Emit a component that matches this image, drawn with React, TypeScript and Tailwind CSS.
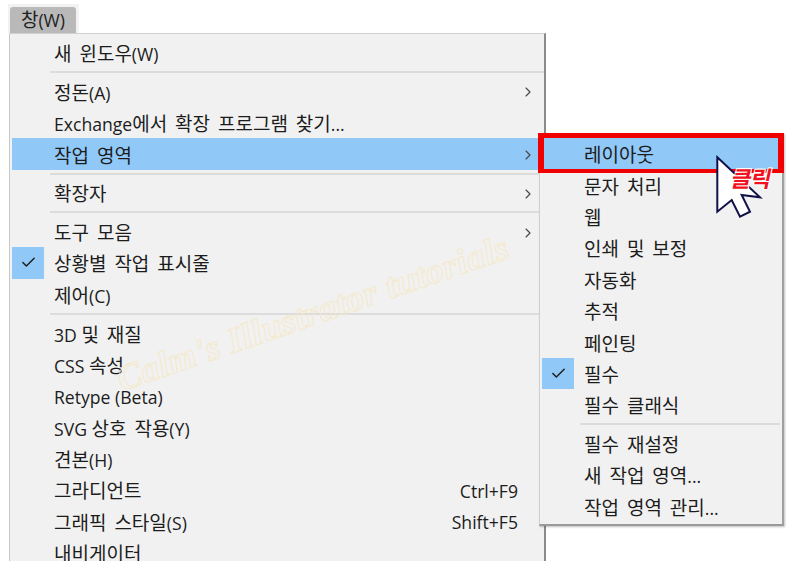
import React from "react";
import { Check, ChevronRight } from "lucide-react";

// ─── Menu data ─────────────────────────────────────────────────────────────────

type Item = { label?: string; sep?: boolean; arrow?: boolean; checked?: boolean; hot?: boolean; key?: string };

const mainItems: Item[] = [
  { label: "새 윈도우(W)" },
  { sep: true },
  { label: "정돈(A)", arrow: true },
  { label: "Exchange에서 확장 프로그램 찾기..." },
  { label: "작업 영역", arrow: true, hot: true },
  { sep: true },
  { label: "확장자", arrow: true },
  { sep: true },
  { label: "도구 모음", arrow: true },
  { label: "상황별 작업 표시줄", checked: true },
  { label: "제어(C)" },
  { sep: true },
  { label: "3D 및 재질" },
  { label: "CSS 속성" },
  { label: "Retype (Beta)" },
  { label: "SVG 상호 작용(Y)" },
  { label: "견본(H)" },
  { label: "그라디언트", key: "Ctrl+F9" },
  { label: "그래픽 스타일(S)", key: "Shift+F5" },
  { label: "내비게이터" },
];

const subItems: Item[] = [
  { label: "레이아웃", hot: true },
  { label: "문자 처리" },
  { label: "웹" },
  { label: "인쇄 및 보정" },
  { label: "자동화" },
  { label: "추적" },
  { label: "페인팅" },
  { label: "필수", checked: true },
  { label: "필수 클래식" },
  { sep: true },
  { label: "필수 재설정" },
  { label: "새 작업 영역..." },
  { label: "작업 영역 관리..." },
];

// Hangul runs are set larger than latin ones, the reference font has wider Hangul
const Label: React.FC<{ text: string }> = ({ text }) => (
  <span className="whitespace-nowrap text-[17.6px] leading-none">
    {text.split(/([가-힣]+(?: [가-힣]+)*)/).map((run, i) =>
      /[가-힣]/.test(run) ? (
        <span key={i} className="text-[19px] [word-spacing:3px]">
          {run}
        </span>
      ) : (
        <span key={i}>{run}</span>
      )
    )}
  </span>
);

const MenuRow: React.FC<{ item: Item; sepClass: string }> = ({ item, sepClass }) => {
  if (item.sep) {
    return (
      <div className={`flex h-[7.3px] items-center ${sepClass}`}>
        <div className="h-[2px] w-full bg-[#dcdcdc]" />
      </div>
    );
  }
  return (
    <div className={`flex h-[31.4px] items-center text-[#1c1c1c] ${item.hot ? "bg-[#90c8f8]" : ""}`}>
      <div className="flex h-full w-[32px] shrink-0 items-center justify-center">
        {item.checked && (
          <div className="flex h-full w-full items-center justify-center bg-[#90c8f8]">
            <Check className="h-[17px] w-[17px] text-[#222222]" strokeWidth={2.2} />
          </div>
        )}
      </div>
      <span className="ml-[10px] mt-[4px] flex">
        <Label text={item.label ?? ""} />
      </span>
      {item.key && <span className="ml-auto mr-[26px] mt-[2px] whitespace-nowrap text-[17.6px]">{item.key}</span>}
      {item.arrow && <ChevronRight className="ml-auto mr-[8px] mt-[2px] h-[16px] w-[16px] text-[#444444]" strokeWidth={1.6} />}
    </div>
  );
};

export default function App() {
  return (
    <div className="relative h-[577px] w-[800px] overflow-hidden bg-white font-['Open_Sans','Noto_Sans_CJK_KR',sans-serif]">
      {/* menu bar */}
      <div className="ml-[8px] mt-[4px] flex h-[29px] w-[71px] items-end justify-start bg-[#f2f2f2] pl-[2px]">
        <div className="flex h-[26px] w-[66px] items-center justify-center rounded-t-[3px] bg-[#b9b9b9] text-[#222222]">
          <Label text="창(W)" />
        </div>
      </div>

      {/* main menu, cut off by the picture edge */}
      <div className="ml-[9px] h-[528px] w-[537px] overflow-hidden border-r-2 border-l border-t border-r-[#8a8a8a] border-l-[#c8c8c8] border-t-[#d0d0d0] bg-[#f1f1f1] pl-[2px] pt-[3px]">
        {mainItems.map((item, i) => (
          <MenuRow key={i} item={item} sepClass="ml-[38px]" />
        ))}
      </div>

      {/* submenu */}
      <div className="absolute left-[539px] top-[133px] h-[393px] w-[245px] border-r-2 border-b-2 border-l border-r-[#a0a0a0] border-b-[#9a9a9a] border-l-[#d0d0d0] bg-[#f1f1f1] pl-[2px] pt-[5px] shadow-[1px_1px_2px_rgba(0,0,0,0.25)]">
        {subItems.map((item, i) => (
          <MenuRow key={i} item={item} sepClass="ml-[38px] mr-[2px]" />
        ))}
      </div>

      {/* red highlight around the first submenu row */}
      <div className="absolute left-[538px] top-[133px] h-[40px] w-[246px] border-x-[6px] border-t-[5px] border-b-[4px] border-[#f00000]" />

      {/* pointer */}
      <svg className="absolute left-[714px] top-[154px]" width="50" height="66" viewBox="0 0 50 66">
        <path
          d="M3.3 3.3 L46 43.3 L27.7 41 L36 57.7 L26 62.7 L17.7 46 L3.3 57.7 Z"
          fill="#ffffff"
          stroke="#10104a"
          strokeWidth="2"
          strokeLinejoin="miter"
        />
      </svg>
      <div className="absolute left-[732px] top-[167px] -skew-x-12 whitespace-nowrap text-[22px] font-bold leading-none tracking-[-0.5px] text-[#f01020] [text-shadow:1px_1px_0_#ffffff,-1px_-1px_0_#ffffff,1px_-1px_0_#ffffff,-1px_1px_0_#ffffff]">
        클릭
      </div>

      {/* watermark */}
      <div className="absolute left-[118px] top-[362px] origin-left -rotate-[19deg] whitespace-nowrap font-['Liberation_Serif',serif] text-[36px] font-bold italic leading-none tracking-[0.5px] text-transparent [-webkit-text-stroke:0.8px_#f5e8c4]">
        Calm's Illustrator tutorials
      </div>
    </div>
  );
}
